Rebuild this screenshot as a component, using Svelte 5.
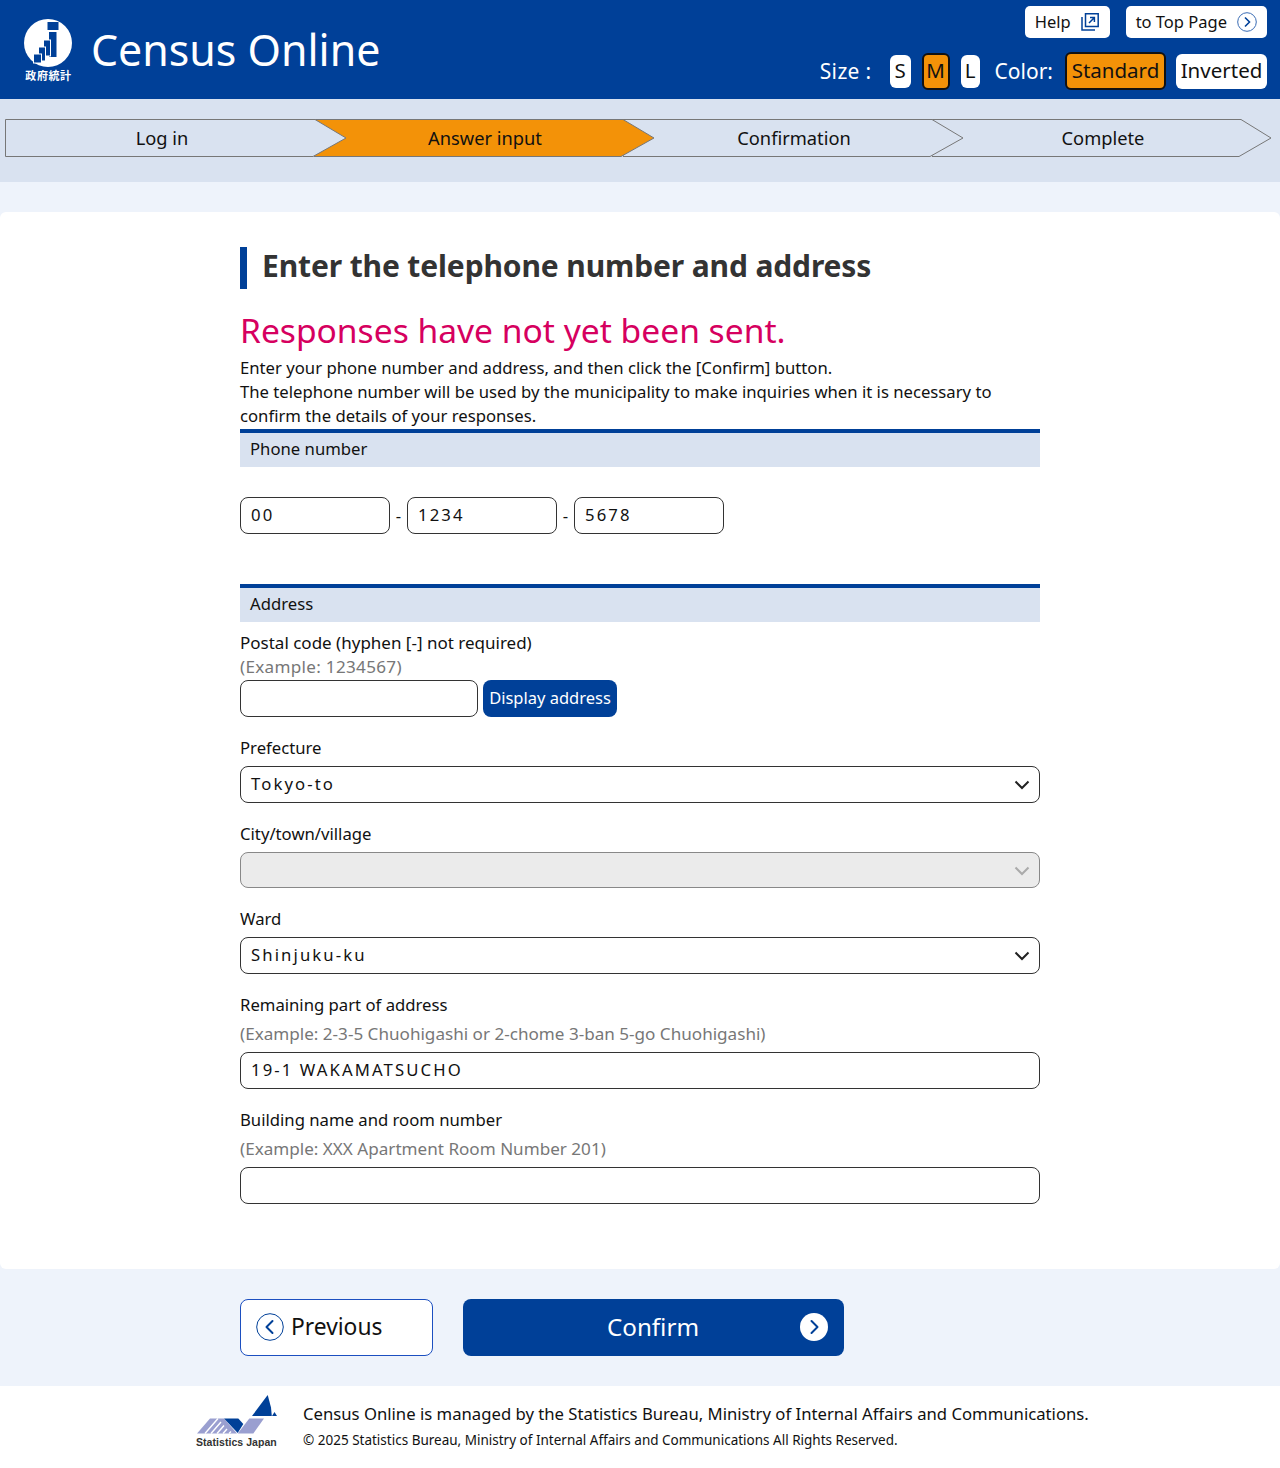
<script lang="ts">
  const steps = [
    { label: 'Log in', points: '0.5,0.5 310,0.5 341,19 308,37.5 0.5,37.5' },
    { label: 'Answer input', current: true, points: '0,0.5 309,0.5 340,19 307,37.5 0,37.5' },
    { label: 'Confirmation', points: '0,0.5 309,0.5 340,19 307,37.5 0,37.5' },
    { label: 'Complete', points: '0,0.5 309,0.5 339,19 307,37.5 0,37.5' }
  ];
</script>

<header class="top">
  <div class="brand">
    <div class="logo">
      <svg width="53" height="48" viewBox="0 0 53 48" aria-hidden="true">
        <circle cx="26" cy="24" r="24" fill="#fff" />
        <rect x="25.500" y="3" width="11" height="8" fill="#004098" />
        <rect x="27" y="13" width="7.500" height="25" fill="#004098" />
        <rect x="21.500" y="21" width="7" height="16" fill="#004098" stroke="#fff" />
        <rect x="16.500" y="28" width="7" height="14" fill="#004098" stroke="#fff" />
        <rect x="11.500" y="35" width="8" height="9" fill="#004098" stroke="#fff" />
      </svg>
      <span class="logo-text">政府統計</span>
    </div>
    <span class="site-name">Census Online</span>
  </div>
  <div class="tools">
    <div class="tool-links">
      <a class="tool-link help">Help
        <svg width="18" height="18" viewBox="0 0 18 18" fill="none" stroke="#004098" aria-hidden="true">
          <path d="M4.500 .8h12.700v12.700H4.500z" stroke-width="1.500" />
          <path d="M1 4v13h13" stroke-width="1.500" />
          <path d="M8 10l5-5M9 4.600h4.400V9" stroke-width="1.500" />
        </svg>
      </a>
      <a class="tool-link top-link">to Top Page
        <svg width="20" height="20" viewBox="0 0 20 20" fill="none" stroke="#3a6cb4" aria-hidden="true">
          <circle cx="10" cy="10" r="9.300" />
          <path d="M8 5.500l4.500 4.500L8 14.500" stroke="#004098" stroke-width="1.600" />
        </svg>
      </a>
    </div>
    <div class="switches">
      <span class="switch-label size-label">Size :</span>
      <button class="sw s">S</button>
      <button class="sw m on">M</button>
      <button class="sw l">L</button>
      <span class="switch-label color-label">Color:</span>
      <button class="sw std on">Standard</button>
      <button class="sw inv">Inverted</button>
    </div>
  </div>
</header>

<nav class="steps">
  {#each steps as step}
    <div class="step" class:current={step.current}>
      <svg width="342" height="38" viewBox="0 0 342 38" aria-hidden="true">
        <polygon points={step.points} />
      </svg>
      <span>{step.label}</span>
    </div>
  {/each}
</nav>

<div class="page">
  <main class="card">
    <div class="inner">
      <h1>Enter the telephone number and address</h1>
      <p class="alert">Responses have not yet been sent.</p>
      <p class="lead">Enter your phone number and address, and then click the [Confirm] button.<br />The telephone number will be used by the municipality to make inquiries when it is necessary to confirm the details of your responses.</p>

      <h2>Phone number</h2>
      <div class="phone">
        <input class="field short" value="00" />
        <span>-</span>
        <input class="field short" value="1234" />
        <span>-</span>
        <input class="field short" value="5678" />
      </div>

      <h2 class="address-head">Address</h2>
      <label class="row first postal-label">Postal code (hyphen [-] not required)</label>
      <p class="hint tight">(Example: 1234567)</p>
      <div class="postal">
        <input class="field zip" />
        <button class="lookup">Display address</button>
      </div>

      <label class="row gap">Prefecture</label>
      <div class="select">
        <div class="field">Tokyo-to</div>
        <svg width="16" height="10" viewBox="0 0 16 10" aria-hidden="true"><path d="M1.500 1.500L8 8l6.500-6.500" /></svg>
      </div>

      <label class="row gap">City/town/village</label>
      <div class="select disabled">
        <div class="field"></div>
        <svg width="16" height="10" viewBox="0 0 16 10" aria-hidden="true"><path d="M1.500 1.500L8 8l6.500-6.500" /></svg>
      </div>

      <label class="row gap">Ward</label>
      <div class="select">
        <div class="field">Shinjuku-ku</div>
        <svg width="16" height="10" viewBox="0 0 16 10" aria-hidden="true"><path d="M1.500 1.500L8 8l6.500-6.500" /></svg>
      </div>

      <label class="row gap">Remaining part of address</label>
      <p class="hint">(Example: 2-3-5 Chuohigashi or 2-chome 3-ban 5-go Chuohigashi)</p>
      <input class="field wide" value="19-1 WAKAMATSUCHO" />

      <label class="row gap">Building name and room number</label>
      <p class="hint">(Example: XXX Apartment Room Number 201)</p>
      <input class="field wide" />
    </div>
  </main>

  <div class="actions">
    <button class="prev">
      <svg width="28" height="28" viewBox="0 0 28 28" fill="none" aria-hidden="true">
        <circle cx="14" cy="14" r="13.300" stroke="#004098" />
        <path d="M16.500 8l-6 6 6 6" stroke="#004098" stroke-width="2" stroke-linecap="round" stroke-linejoin="round" />
      </svg>
      <span>Previous</span>
    </button>
    <button class="confirm">
      <span>Confirm</span>
      <svg width="28" height="28" viewBox="0 0 28 28" fill="none" aria-hidden="true">
        <circle cx="14" cy="14" r="14" fill="#fff" />
        <path d="M11.500 8l6 6-6 6" stroke="#004098" stroke-width="2" stroke-linecap="round" stroke-linejoin="round" />
      </svg>
    </button>
  </div>
</div>

<footer class="foot">
  <div class="stat-logo">
    <svg width="82" height="39" viewBox="0 0 82 39" aria-hidden="true">
      <path d="M56 21L71.700 0 75 12.500 75.800 21z" fill="#004098" />
      <path d="M76 21l2.500-4 2.500 4z" fill="#004098" />
      <path d="M1 38.500L14 23.500H28L41 38.500z" fill="#9a9fd0" />
      <path d="M28 23.500H42.300L47.300 29 41.700 38z" fill="#004098" />
      <path d="M41.700 38.500L53.300 23.500H68L57.300 38.500z" fill="#9a9fd0" />
      <path d="M9 38.500l13-15M15 38.500l10-11.500M21 38.500l7-8M27 38.500l4-4.500M33 38.500l2-2" stroke="#fff" stroke-width="1.400" />
    </svg>
    <span>Statistics Japan</span>
  </div>
  <div class="foot-text">
    <p>Census Online is managed by the Statistics Bureau, Ministry of Internal Affairs and Communications.</p>
    <small>© 2025 Statistics Bureau, Ministry of Internal Affairs and Communications All Rights Reserved.</small>
  </div>
</footer>

<style>
  :global(body) {
    font-family: "Noto Sans", "Noto Sans CJK JP", sans-serif;
    font-size: 16.7px;
    color: #111;
    background: #fff;
  }
  :global(*) { box-sizing: border-box; }
  p, h1, h2 { margin: 0; }
  button { font-family: inherit; cursor: pointer; }

  .top {
    height: 99px;
    background: #004098;
    display: flex;
    justify-content: space-between;
    padding: 0 13px 0 22px;
  }
  .brand { display: flex; align-items: center; gap: 16px; }
  .logo { width: 53px; display: flex; flex-direction: column; align-items: center; padding-top: 19px; height: 99px; }
  .logo svg { display: block; flex: none; }
  .logo-text { font: bold 11px/12px "Noto Sans CJK JP", sans-serif; letter-spacing: .6px; color: #fff; margin-top: 2px; white-space: nowrap; }
  .site-name { color: #fff; font-size: 42.900px; }

  .tools { display: flex; flex-direction: column; align-items: flex-end; padding-top: 6px; }
  .tool-links { display: flex; gap: 16px; }
  .tool-link {
    height: 32px;
    background: #fff;
    border-radius: 5px;
    display: flex;
    align-items: center;
    gap: 10px;
    padding: 0 11px 2px 10px;
    font-size: 16.500px;
  }
  .tool-link svg { margin-top: 2px; }
  .top-link { padding-right: 10px; }
  .switches { display: flex; align-items: center; margin-top: 14px; height: 38px; }
  .switch-label { color: #fff; font-size: 21px; }
  .size-label { margin-right: 18px; letter-spacing: .35px; }
  .color-label { margin: 0 12px 0 15px; }
  .sw {
    background: #fff;
    border: 0;
    border-radius: 6px;
    font-size: 20.500px;
    color: #111;
    height: 33px;
    padding: 0 0 2px;
    margin-right: 11px;
  }
  .sw.s { width: 21px; }
  .sw.m { width: 28px; }
  .sw.l { width: 19px; margin-right: 0; }
  .sw.on { background: #f39208; border: 2px solid #111; height: 37px; }
  .sw.std { width: 101px; height: 38px; margin-right: 10px; }
  .sw.inv { width: 91px; margin-right: 0; height: 35px; }

  .steps {
    background: #d9e2f0;
    height: 83px;
    padding: 20px 0 0 5px;
    display: flex;
  }
  .step { flex: 0 0 309px; min-width: 0; height: 38px; position: relative; }
  .step:first-child { z-index: 4; }
  .step:nth-child(2) { z-index: 3; }
  .step:nth-child(3) { z-index: 2; }
  .step svg { position: absolute; left: 0; top: 0; }
  .step polygon { fill: #d9e2f0; stroke: #777; stroke-width: 1; }
  .step.current polygon { fill: #f39208; }
  .step span {
    position: relative;
    display: block;
    width: 342px;
    text-align: center;
    line-height: 38px;
    font-size: 18.300px;
  }
  .step:first-child span { width: 314px; }

  .page { background: #eef3fb; padding-top: 30px; }
  .card { background: #fff; border-radius: 6px; height: 1057px; padding-top: 35px; }
  .inner { width: 800px; margin: 0 auto; }

  h1 {
    border-left: 7px solid #004098;
    padding: 0 0 4px 15px;
    font-size: 30px;
    height: 42px;
    line-height: 38px;
    color: #333;
    font-weight: bold;
    letter-spacing: -.13px;
  }
  .alert { color: #d6005f; font-size: 33.600px; line-height: 46px; padding-bottom: 2px; margin-top: 18px; }
  .lead { line-height: 24px; margin-top: 1px; }

  h2 {
    border-top: 4px solid #004098;
    background: #d9e2f0;
    height: 38px;
    line-height: 32px;
    padding-left: 10px;
    font-size: 16.700px;
    font-weight: normal;
    margin-top: 1px;
  }
  .address-head { margin-top: 50px; }

  .field {
    display: block;
    width: 100%;
    height: 37px;
    border: 1px solid #333;
    border-radius: 8px;
    background: #fff;
    padding: 0 10px;
    font: inherit;
    line-height: 34px;
    letter-spacing: 2.100px;
    color: #111;
  }
  input.field { padding-bottom: 2px; }
  .phone { display: flex; align-items: center; gap: 5px; margin-top: 30px; }
  .phone span { flex: 0 0 7px; text-align: center; }
  .short { width: 150px; }

  .row { display: block; line-height: 24px; }
  .first { margin-top: 9px; }
  .postal-label { font-size: 17px; }
  .gap { margin-top: 19px; }
  .hint { color: #777; line-height: 24px; font-size: 17.100px; }
  .hint:not(.tight) { margin-top: 5px; margin-bottom: 6px; }
  .tight { margin-bottom: 1px; letter-spacing: .3px; }
  .postal { display: flex; gap: 5px; }
  .zip { width: 238px; }
  .lookup {
    background: #004098;
    color: #fff;
    border: 0;
    border-radius: 8px;
    font-size: 16.500px;
    padding: 0 0 2px;
    width: 134px;
    height: 37px;
  }
  .select { position: relative; margin-top: 6px; }
  .select svg { position: absolute; right: 10px; top: 14px; fill: none; stroke: #222; stroke-width: 2; }
  .select.disabled .field { background: #ebebeb; border-color: #888; height: 36px; }
  .select.disabled svg { stroke: #aaa; }
  .wide { width: 800px; }

  .actions {
    height: 117px;
    padding: 30px 0 0 240px;
    display: flex;
    gap: 30px;
  }
  .prev, .confirm { height: 57px; border-radius: 8px; display: flex; align-items: center; }
  .prev svg, .confirm svg { margin-bottom: 1px; }
  .prev {
    width: 193px;
    background: #fff;
    border: 1px solid #1c4fc0;
    color: #111;
    padding: 0 0 0 15px;
    gap: 7px;
    font-size: 22.800px;
  }
  .prev span { padding-bottom: 3px; }
  .confirm {
    width: 381px;
    background: #004098;
    color: #fff;
    border: 0;
    padding: 0 16px 0 0;
    position: relative;
    justify-content: flex-end;
  }
  .confirm span { position: absolute; left: 144px; font-size: 24.200px; padding-bottom: 3px; }

  .foot { height: 82px; display: flex; padding: 9px 0 0 196px; gap: 25px; }
  .stat-logo { width: 82px; flex: none; }
  .stat-logo svg { display: block; }
  .stat-logo span { display: block; font: bold 10.500px/12px "Liberation Sans", sans-serif; letter-spacing: .05px; color: #333; white-space: nowrap; margin-top: 2px; }
  .foot-text p { margin-top: 7px; line-height: 24px; }
  .foot-text small { display: block; font-size: 13.500px; line-height: 20px; margin-top: 4px; }
</style>
